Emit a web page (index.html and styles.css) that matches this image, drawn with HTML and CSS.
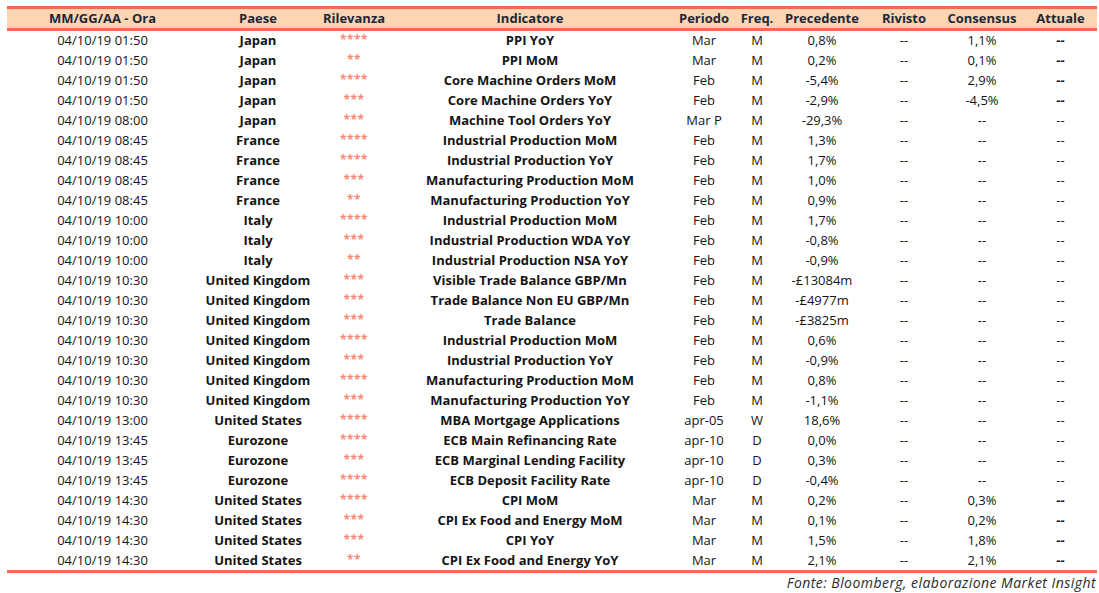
FILE: index.html
```html
<!DOCTYPE html>
<html lang="it">
<head>
<meta charset="utf-8">
<title>Calendario macro</title>
<link rel="stylesheet" href="styles.css">
</head>
<body>
<div class="wrap">
<table class="cal">
<colgroup>
<col class="c1"><col class="c2"><col class="c3"><col class="c4"><col class="c5"><col class="c6"><col class="c7"><col class="c8"><col class="c9"><col class="c10">
</colgroup>
<thead>
<tr><th>MM/GG/AA - Ora</th><th>Paese</th><th>Rilevanza</th><th>Indicatore</th><th>Periodo</th><th>Freq.</th><th>Precedente</th><th>Rivisto</th><th>Consensus</th><th>Attuale</th></tr>
</thead>
<tbody>
<tr><td>04/10/19 01:50</td><td class="b">Japan</td><td class="s">****</td><td class="b">PPI YoY</td><td>Mar</td><td>M</td><td>0,8%</td><td>--</td><td>1,1%</td><td class="a">--</td></tr>
<tr><td>04/10/19 01:50</td><td class="b">Japan</td><td class="s">**</td><td class="b">PPI MoM</td><td>Mar</td><td>M</td><td>0,2%</td><td>--</td><td>0,1%</td><td class="a">--</td></tr>
<tr><td>04/10/19 01:50</td><td class="b">Japan</td><td class="s">****</td><td class="b">Core Machine Orders MoM</td><td>Feb</td><td>M</td><td>-5,4%</td><td>--</td><td>2,9%</td><td class="a">--</td></tr>
<tr><td>04/10/19 01:50</td><td class="b">Japan</td><td class="s">***</td><td class="b">Core Machine Orders YoY</td><td>Feb</td><td>M</td><td>-2,9%</td><td>--</td><td>-4,5%</td><td class="a">--</td></tr>
<tr><td>04/10/19 08:00</td><td class="b">Japan</td><td class="s">***</td><td class="b">Machine Tool Orders YoY</td><td>Mar P</td><td>M</td><td>-29,3%</td><td>--</td><td>--</td><td>--</td></tr>
<tr><td>04/10/19 08:45</td><td class="b">France</td><td class="s">****</td><td class="b">Industrial Production MoM</td><td>Feb</td><td>M</td><td>1,3%</td><td>--</td><td>--</td><td>--</td></tr>
<tr><td>04/10/19 08:45</td><td class="b">France</td><td class="s">****</td><td class="b">Industrial Production YoY</td><td>Feb</td><td>M</td><td>1,7%</td><td>--</td><td>--</td><td>--</td></tr>
<tr><td>04/10/19 08:45</td><td class="b">France</td><td class="s">***</td><td class="b">Manufacturing Production MoM</td><td>Feb</td><td>M</td><td>1,0%</td><td>--</td><td>--</td><td>--</td></tr>
<tr><td>04/10/19 08:45</td><td class="b">France</td><td class="s">**</td><td class="b">Manufacturing Production YoY</td><td>Feb</td><td>M</td><td>0,9%</td><td>--</td><td>--</td><td>--</td></tr>
<tr><td>04/10/19 10:00</td><td class="b">Italy</td><td class="s">****</td><td class="b">Industrial Production MoM</td><td>Feb</td><td>M</td><td>1,7%</td><td>--</td><td>--</td><td>--</td></tr>
<tr><td>04/10/19 10:00</td><td class="b">Italy</td><td class="s">***</td><td class="b">Industrial Production WDA YoY</td><td>Feb</td><td>M</td><td>-0,8%</td><td>--</td><td>--</td><td>--</td></tr>
<tr><td>04/10/19 10:00</td><td class="b">Italy</td><td class="s">**</td><td class="b">Industrial Production NSA YoY</td><td>Feb</td><td>M</td><td>-0,9%</td><td>--</td><td>--</td><td>--</td></tr>
<tr><td>04/10/19 10:30</td><td class="b">United Kingdom</td><td class="s">***</td><td class="b">Visible Trade Balance GBP/Mn</td><td>Feb</td><td>M</td><td>-£13084m</td><td>--</td><td>--</td><td>--</td></tr>
<tr><td>04/10/19 10:30</td><td class="b">United Kingdom</td><td class="s">***</td><td class="b">Trade Balance Non EU GBP/Mn</td><td>Feb</td><td>M</td><td>-£4977m</td><td>--</td><td>--</td><td>--</td></tr>
<tr><td>04/10/19 10:30</td><td class="b">United Kingdom</td><td class="s">***</td><td class="b">Trade Balance</td><td>Feb</td><td>M</td><td>-£3825m</td><td>--</td><td>--</td><td>--</td></tr>
<tr><td>04/10/19 10:30</td><td class="b">United Kingdom</td><td class="s">****</td><td class="b">Industrial Production MoM</td><td>Feb</td><td>M</td><td>0,6%</td><td>--</td><td>--</td><td>--</td></tr>
<tr><td>04/10/19 10:30</td><td class="b">United Kingdom</td><td class="s">***</td><td class="b">Industrial Production YoY</td><td>Feb</td><td>M</td><td>-0,9%</td><td>--</td><td>--</td><td>--</td></tr>
<tr><td>04/10/19 10:30</td><td class="b">United Kingdom</td><td class="s">****</td><td class="b">Manufacturing Production MoM</td><td>Feb</td><td>M</td><td>0,8%</td><td>--</td><td>--</td><td>--</td></tr>
<tr><td>04/10/19 10:30</td><td class="b">United Kingdom</td><td class="s">***</td><td class="b">Manufacturing Production YoY</td><td>Feb</td><td>M</td><td>-1,1%</td><td>--</td><td>--</td><td>--</td></tr>
<tr><td>04/10/19 13:00</td><td class="b">United States</td><td class="s">****</td><td class="b">MBA Mortgage Applications</td><td>apr-05</td><td>W</td><td>18,6%</td><td>--</td><td>--</td><td>--</td></tr>
<tr><td>04/10/19 13:45</td><td class="b">Eurozone</td><td class="s">****</td><td class="b">ECB Main Refinancing Rate</td><td>apr-10</td><td>D</td><td>0,0%</td><td>--</td><td>--</td><td>--</td></tr>
<tr><td>04/10/19 13:45</td><td class="b">Eurozone</td><td class="s">***</td><td class="b">ECB Marginal Lending Facility</td><td>apr-10</td><td>D</td><td>0,3%</td><td>--</td><td>--</td><td>--</td></tr>
<tr><td>04/10/19 13:45</td><td class="b">Eurozone</td><td class="s">****</td><td class="b">ECB Deposit Facility Rate</td><td>apr-10</td><td>D</td><td>-0,4%</td><td>--</td><td>--</td><td>--</td></tr>
<tr><td>04/10/19 14:30</td><td class="b">United States</td><td class="s">****</td><td class="b">CPI MoM</td><td>Mar</td><td>M</td><td>0,2%</td><td>--</td><td>0,3%</td><td class="a">--</td></tr>
<tr><td>04/10/19 14:30</td><td class="b">United States</td><td class="s">***</td><td class="b">CPI Ex Food and Energy MoM</td><td>Mar</td><td>M</td><td>0,1%</td><td>--</td><td>0,2%</td><td class="a">--</td></tr>
<tr><td>04/10/19 14:30</td><td class="b">United States</td><td class="s">***</td><td class="b">CPI YoY</td><td>Mar</td><td>M</td><td>1,5%</td><td>--</td><td>1,8%</td><td class="a">--</td></tr>
<tr class="last"><td>04/10/19 14:30</td><td class="b">United States</td><td class="s">**</td><td class="b">CPI Ex Food and Energy YoY</td><td>Mar</td><td>M</td><td>2,1%</td><td>--</td><td>2,1%</td><td class="a">--</td></tr>
</tbody>
</table>
<p class="source">Fonte: Bloomberg, elaborazione Market Insight</p>
</div>
</body>
</html>
```

FILE: styles.css
```css
html, body {
  margin: 0;
  padding: 0;
  background: #ffffff;
}

body {
  font-family: "Open Sans", "DejaVu Sans", sans-serif;
  color: #141414;
}

.wrap {
  padding: 6px 2px 0 7px;
}

.cal {
  width: 1090px;
  table-layout: fixed;
  border-collapse: collapse;
  border-top: 3px solid #f4694f;
  border-bottom: 3px solid #f4694f;
}

.c1 { width: 191px; }
.c2 { width: 120px; }
.c3 { width: 72px; }
.c4 { width: 280px; }
.c5 { width: 68px; }
.c6 { width: 38px; }
.c7 { width: 92px; }
.c8 { width: 72px; }
.c9 { width: 84px; }
.c10 { width: 73px; }

.cal thead tr {
  background: #fdd5b3;
  border-bottom: 3px solid #f4694f;
}

.cal th {
  height: 19px;
  padding: 0;
  font-size: 13px;
  font-weight: 700;
  color: #1d2737;
  text-align: center;
  line-height: 19px;
  white-space: nowrap;
}

.cal tbody tr {
  height: 20px;
}

.cal td {
  padding: 0;
  font-size: 13px;
  line-height: 16px;
  height: 20px;
  box-sizing: border-box;
  text-align: center;
  white-space: nowrap;
  overflow: hidden;
}

.cal tbody tr.last td {
  height: 22px;
  padding-top: 1px;
}

.cal td.b {
  font-weight: 700;
}

.cal td.s {
  color: #f58a76;
  font-size: 12px;
  font-weight: 700;
  letter-spacing: 0.5px;
  vertical-align: middle;
}

.cal td.a {
  font-weight: 700;
}

.source {
  margin: 1px 1px 0 0;
  font-size: 14px;
  font-style: italic;
  color: #2a2a2a;
  text-align: right;
  line-height: 18px;
  letter-spacing: 0.45px;
}
```
